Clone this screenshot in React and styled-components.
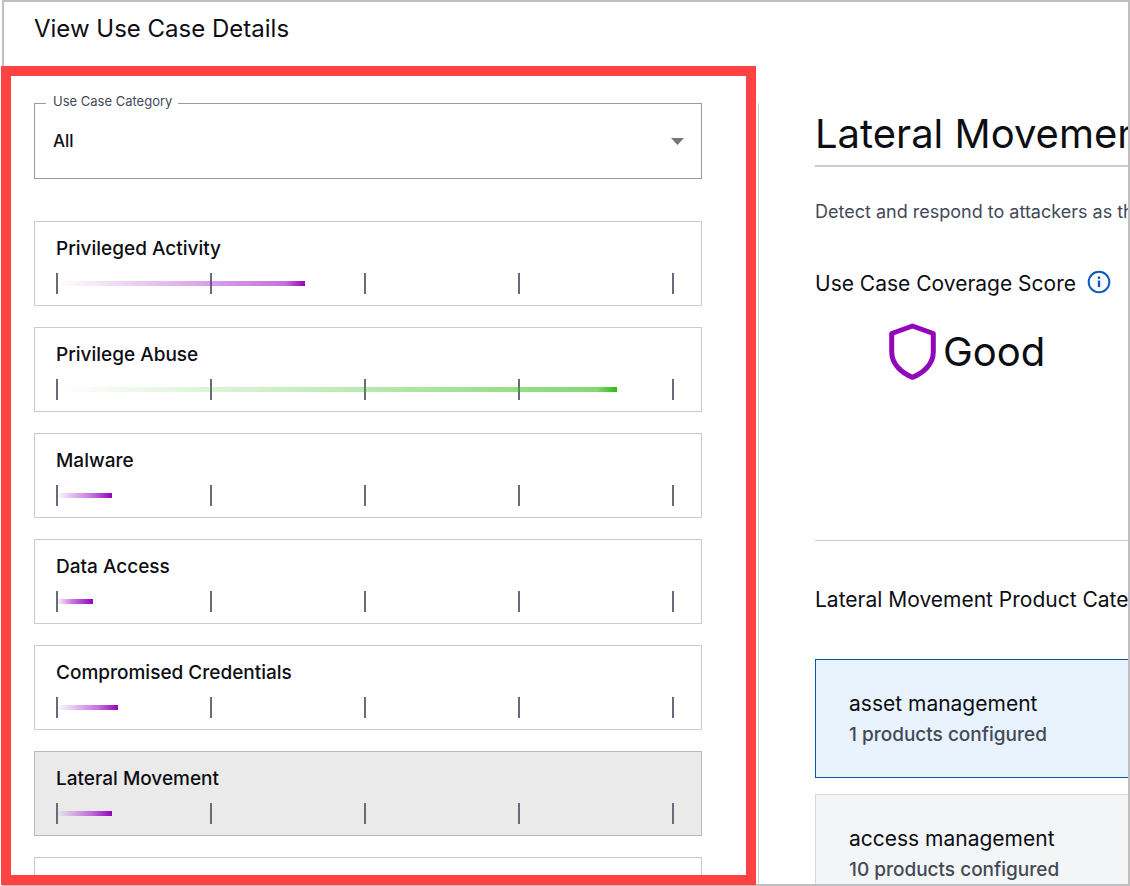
import React, { useState } from 'react';
import styled, { createGlobalStyle } from 'styled-components';

const GlobalStyle = createGlobalStyle`
  *, *::before, *::after { box-sizing: border-box; }
  body {
    margin: 0;
    background: #fff;
    color: #0d0e14;
    font-family: Inter, "Liberation Sans", sans-serif;
  }
  h1, h2, h3, h4, p, ul { margin: 0; padding: 0; font-weight: 400; }
  ul { list-style: none; }
`;

const Frame = styled.div`
  display: flex;
  flex-direction: column;
  height: 100vh;
  margin-left: 2px;
  border: 2px solid #bfbfbf;
`;

const Header = styled.header`
  flex: none;
  height: 64px;
  padding: 11px 30px;
`;

const PageTitle = styled.h1`
  font-size: 24px;
  line-height: 32px;
`;

const Body = styled.main`
  flex: 1;
  min-height: 0;
  display: grid;
  grid-template-columns: minmax(0, 754fr) minmax(0, 370fr);
  grid-template-rows: minmax(0, 1fr);
`;

const Sidebar = styled.section`
  position: relative;
  min-height: 0;
`;

const SidebarContent = styled.div`
  height: 100%;
  overflow: hidden;
  padding: 37px 56px 0 30px;
`;

const Highlight = styled.div`
  position: absolute;
  inset: 0 2px -1px -3px;
  border: 10px solid #ff4343;
  pointer-events: none;
`;

const Field = styled.div`
  position: relative;
  margin-bottom: 42px;
`;

const FieldLabel = styled.label`
  position: absolute;
  top: -10px;
  left: 12px;
  padding: 0 6px 0 7px;
  background: #fff;
  color: #434956;
  font-size: 13px;
  line-height: 16px;
`;

const Select = styled.select`
  display: block;
  width: 100%;
  height: 76px;
  padding: 0 18px;
  appearance: none;
  border: 1px solid #9b9b9b;
  border-radius: 0;
  background: transparent;
  color: inherit;
  font: 500 17px/24px Inter, "Liberation Sans", sans-serif;
`;

const Caret = styled.svg`
  position: absolute;
  top: 35px;
  right: 18px;
  pointer-events: none;
`;

const CaseList = styled.ul`
  display: flex;
  flex-direction: column;
  gap: 21px;
`;

const CaseCard = styled.button`
  display: block;
  width: 100%;
  padding: 15px 27px 11px 21px;
  border: 1px solid ${(p) => (p.$selected ? '#b8b8b8' : '#cbcbcb')};
  background: ${(p) => (p.$selected ? '#eaeaea' : '#fff')};
  color: inherit;
  font: inherit;
  text-align: left;
`;

const CaseName = styled.span`
  display: block;
  height: 24px;
  margin-bottom: 12px;
  font-size: 19px;
  font-weight: 500;
  line-height: 24px;
`;

const Meter = styled.span`
  display: grid;
  height: 21px;
  align-items: center;
`;

const Ticks = styled.span`
  grid-area: 1 / 1;
  display: flex;
  justify-content: space-between;
  height: 21px;
`;

const Tick = styled.span`
  width: 2px;
  background: #666c7a;
`;

const tones = {
  purple: ['rgba(145, 7, 185, 0)', 'rgba(160, 20, 200, 0.6)', '#9107b9'],
  green: ['rgba(43, 187, 15, 0)', 'rgba(43, 187, 15, 0.58)', '#2bbb0f'],
};

const Bar = styled.span`
  grid-area: 1 / 1;
  height: 5px;
  background: linear-gradient(
    to right,
    ${(p) => tones[p.$tone][0]},
    ${(p) => tones[p.$tone][1]} calc(100% - 20px),
    ${(p) => tones[p.$tone][2]}
  );
`;

const Details = styled.section`
  min-width: 0;
  margin-top: 37px;
  padding-left: 56px;
  border-left: 1px solid #cbcbcb;
  overflow: hidden;
  white-space: nowrap;
`;

const DetailsTitle = styled.h2`
  height: 64px;
  padding-top: 7px;
  border-bottom: 2px solid #cbcbcb;
  font-size: 40px;
  line-height: 48px;
`;

const Description = styled.p`
  margin-top: 33px;
  color: #434956;
  font-size: 18px;
  line-height: 24px;
`;

const Score = styled.div`
  height: 317px;
  border-bottom: 1px solid #cbcbcb;
  padding-top: 46px;
`;

const ScoreHeading = styled.div`
  display: flex;
  gap: 11px;
`;

const SectionTitle = styled.h3`
  font-size: 21px;
  line-height: 28px;
`;

const InfoButton = styled.button`
  display: flex;
  width: 24px;
  height: 24px;
  padding: 0;
  border: 0;
  background: none;
`;

const Rating = styled.p`
  display: flex;
  align-items: center;
  gap: 7px;
  margin-top: 25px;
  padding-left: 74px;
  font-size: 40px;
  line-height: 56px;
`;

const Products = styled.div`
  padding-top: 45px;
`;

const ProductList = styled.ul`
  display: flex;
  flex-direction: column;
  gap: 16px;
  margin-top: 45px;
`;

const ProductCard = styled.li`
  height: 119px;
  padding: 30px 33px;
  border: 1px solid ${(p) => (p.$selected ? '#0a57a8' : '#d6d7d9')};
  border-right: 0;
  background: ${(p) => (p.$selected ? '#e8f3fd' : '#f4f5f7')};
`;

const ProductName = styled.h4`
  font-size: 21px;
  line-height: 28px;
`;

const ProductCount = styled.p`
  margin-top: 5px;
  color: #434956;
  font-size: 19px;
  font-weight: 500;
  line-height: 24px;
`;

const cases = [
  { name: 'Privileged Activity', value: 40.3, tone: 'purple' },
  { name: 'Privilege Abuse', value: 90.8, tone: 'green' },
  { name: 'Malware', value: 9, tone: 'purple' },
  { name: 'Data Access', value: 6, tone: 'purple' },
  { name: 'Compromised Credentials', value: 10, tone: 'purple' },
  { name: 'Lateral Movement', value: 9, tone: 'purple' },
  { name: '', value: 0, tone: 'purple' },
];

const products = [
  { name: 'asset management', count: 1 },
  { name: 'access management', count: 10 },
];

function UseCase({ item, selected, onSelect }) {
  return (
    <li>
      <CaseCard type="button" $selected={selected} aria-pressed={selected} onClick={onSelect}>
        <CaseName>{item.name}</CaseName>
        <Meter>
          <Ticks>
            {[0, 25, 50, 75, 100].map((t) => (
              <Tick key={t} />
            ))}
          </Ticks>
          <Bar $tone={item.tone} style={{ width: `${item.value}%` }} />
        </Meter>
      </CaseCard>
    </li>
  );
}

export default function App() {
  const [selected, setSelected] = useState(5);
  return (
    <>
      <GlobalStyle />
      <Frame>
        <Header>
          <PageTitle>View Use Case Details</PageTitle>
        </Header>
        <Body>
          <Sidebar>
            <SidebarContent>
              <Field>
                <Select id="category" defaultValue="All">
                  <option>All</option>
                </Select>
                <FieldLabel htmlFor="category">Use Case Category</FieldLabel>
                <Caret width="13" height="7" viewBox="0 0 13 7" aria-hidden="true">
                  <path d="M0 0h13L6.500 7z" fill="#757575" />
                </Caret>
              </Field>
              <CaseList>
                {cases.map((item, i) => (
                  <UseCase
                    key={i}
                    item={item}
                    selected={i === selected}
                    onSelect={() => setSelected(i)}
                  />
                ))}
              </CaseList>
            </SidebarContent>
            <Highlight />
          </Sidebar>
          <Details>
            <DetailsTitle>Lateral Movement</DetailsTitle>
            <Description>Detect and respond to attackers as they</Description>
            <Score>
              <ScoreHeading>
                <SectionTitle>Use Case Coverage Score</SectionTitle>
                <InfoButton type="button" aria-label="About the coverage score">
                  <svg width="24" height="24" viewBox="0 0 24 24" fill="none">
                    <circle cx="12" cy="12" r="10.300" stroke="#0f5bbd" strokeWidth="2" />
                    <path d="M12 10.500v6.500M12 6.500v2.500" stroke="#0f5bbd" strokeWidth="2.400" />
                  </svg>
                </InfoButton>
              </ScoreHeading>
              <Rating>
                <svg width="47" height="57" viewBox="0 0 47 57" fill="none" aria-hidden="true">
                  <path
                    d="M23.500 3 44.300 10.500V29C44.300 41 34.500 50 23.500 54.300 12.500 50 2.700 41 2.700 29V10.500Z"
                    stroke="#9107b9"
                    strokeWidth="5"
                    strokeLinejoin="round"
                  />
                </svg>
                Good
              </Rating>
            </Score>
            <Products>
              <SectionTitle>Lateral Movement Product Categories</SectionTitle>
              <ProductList>
                {products.map((p, i) => (
                  <ProductCard key={p.name} $selected={i === 0}>
                    <ProductName>{p.name}</ProductName>
                    <ProductCount>{p.count} products configured</ProductCount>
                  </ProductCard>
                ))}
              </ProductList>
            </Products>
          </Details>
        </Body>
      </Frame>
    </>
  );
}
